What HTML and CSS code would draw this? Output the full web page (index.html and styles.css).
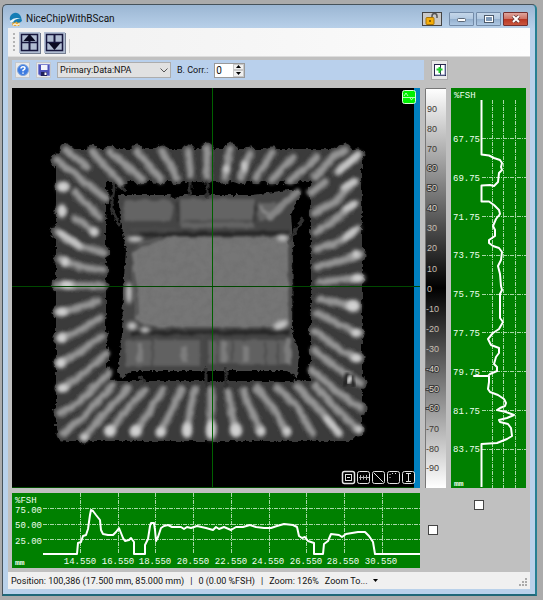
FILE: index.html
```html
<!DOCTYPE html>
<html lang="en">
<head>
<meta charset="utf-8">
<title>NiceChipWithBScan</title>
<link rel="stylesheet" href="styles.css">
</head>
<body>
<main class="window">
  <header class="titlebar">
    <svg class="app-icon" width="14" height="14" viewBox="0 0 14 14" aria-hidden="true">
      <path d="M1 8a5.500 5.500 0 0 1 11-3l1 4-4 3-5-1z" fill="#157db5"/>
      <path d="M1 9q5-5 11-2-5-1-8 3-3 1-3-1z" fill="#e8f3f8"/>
      <path d="M3 12q1-3 3-1 1-3 3 0 2-2 2 1l-1 2H4z" fill="#e5a936"/>
      <path d="M4 13h1v-1h2v1h2v-1h2" stroke="#fff" fill="none"/>
    </svg>
    <h1 class="title">NiceChipWithBScan</h1>
    <button class="lock" type="button" aria-label="Unlock window">
      <svg width="14" height="12" viewBox="0 0 14 12"><path d="M7 5V3a2 2 0 0 1 5 0v2" fill="none" stroke="#555" stroke-width="1.500"/><rect x="1" y="4.500" width="8" height="7" rx="1" fill="#f5ad08" stroke="#a87405"/><path d="M5 7v2" stroke="#6b4900" stroke-width="1.500"/></svg>
    </button>
    <div class="window-buttons">
      <button type="button" class="win-btn" aria-label="Minimize"><svg width="10" height="8" viewBox="0 0 10 8"><rect x=".5" y="3.500" width="8" height="3" rx="1" fill="#fff" stroke="#5b6878"/></svg></button>
      <button type="button" class="win-btn" aria-label="Maximize"><svg width="10" height="8" viewBox="0 0 10 8"><rect x="1.500" y="1.500" width="7" height="5" fill="none" stroke="#4d5a6a" stroke-width="3"/><rect x="1.500" y="1.500" width="7" height="5" fill="#7f9ab8" stroke="#fff"/></svg></button>
      <button type="button" class="win-btn close" aria-label="Close"><svg width="10" height="8" viewBox="0 0 10 8"><path d="M2 1l6 6M8 1L2 7" stroke="#6a3b3b" stroke-width="3.500"/><path d="M2 1l6 6M8 1L2 7" stroke="#fff" stroke-width="2"/></svg></button>
    </div>
  </header>

  <div class="toolbar">
    <span class="grip"></span>
    <button type="button" class="nav-btn" aria-label="Previous"><svg width="21" height="21" viewBox="0 0 21 21"><path d="M2.500 2.500h16v16h-16zM2.500 10.500h16" fill="none" stroke="#16163c" stroke-width="1.500"/><path d="M10.500 18V5" stroke="#16163c" stroke-width="2"/><path d="M10.500 2l6 7h-12z" fill="#0b0b22"/></svg></button>
    <button type="button" class="nav-btn" aria-label="Next"><svg width="21" height="21" viewBox="0 0 21 21"><path d="M2.500 2.500h16v16h-16zM2.500 10.500h16" fill="none" stroke="#16163c" stroke-width="1.500"/><path d="M10.500 3v13" stroke="#16163c" stroke-width="2"/><path d="M10.500 18l6-7h-12z" fill="#0b0b22"/></svg></button>
    <span class="divider"></span>
  </div>

  <section class="workspace">
    <div class="controls">
      <button type="button" class="tool" aria-label="Help"><svg width="12" height="12" viewBox="0 0 12 12"><circle cx="6" cy="6" r="5.500" fill="#3d7be0" stroke="#7fa5dc"/><path d="M4 4.500q0-1.700 2-1.700t2 1.500q0 1-2 2v1M6 8.500v1.300" fill="none" stroke="#fff" stroke-width="1.500"/></svg></button>
      <button type="button" class="tool" aria-label="Save"><svg width="12" height="12" viewBox="0 0 12 12"><path d="M.5.5h11v11H2L.5 10z" fill="#4b50b8" stroke="#7f84d0"/><path d="M3 1h6.500v5H3z" fill="#f3f4fc"/><path d="M3 8h6v4H3z" fill="#20205a"/><path d="M6.500 8.500h2V11h-2z" fill="#fff"/></svg></button>
      <div class="select-wrap">
        <select class="channel" aria-label="Data channel"><option>Primary:Data:NPA</option></select>
        <svg class="chevron" width="8" height="5" viewBox="0 0 8 5" aria-hidden="true"><path d="M.5.5L4 4 7.500.5" fill="none" stroke="#555"/></svg>
      </div>
      <label class="corr" for="corr">B. Corr.:</label>
      <div class="spinner">
        <input id="corr" type="number" value="0">
        <div class="steps">
          <button type="button" aria-label="Increase"><svg width="5" height="3" viewBox="0 0 5 3"><path d="M2.500 0L5 3H0z"/></svg></button>
          <button type="button" aria-label="Decrease"><svg width="5" height="3" viewBox="0 0 5 3"><path d="M2.500 3L5 0H0z"/></svg></button>
        </div>
      </div>
    </div>
    <button type="button" class="tool add" aria-label="Add view"><svg width="12" height="12" viewBox="0 0 12 12"><rect x=".5" y=".5" width="11" height="11" fill="#fff" stroke="#25254a"/><path d="M6.500 1v10" stroke="#25254a"/><path d="M11 1v10M1 11h10" stroke="#7b88b4"/><path d="M2.500 5.500h6M5.500 3v6" stroke="#1ed02c" stroke-width="2"/></svg></button>

    <svg class="map" viewBox="12 88 408 400" preserveAspectRatio="none" role="img" aria-label="C-scan of a chip">
      <defs>
        <filter id="ragged" x="-5%" y="-5%" width="110%" height="110%" color-interpolation-filters="sRGB">
          <feTurbulence type="fractalNoise" baseFrequency=".25" numOctaves="2" seed="4" result="n"/>
          <feDisplacementMap in="SourceGraphic" in2="n" scale="5" xChannelSelector="R" yChannelSelector="G"/>
          <feGaussianBlur stdDeviation=".7"/>
        </filter>
        <filter id="soft" x="-5%" y="-5%" width="110%" height="110%" color-interpolation-filters="sRGB">
          <feTurbulence type="fractalNoise" baseFrequency=".1" numOctaves="2" seed="9" result="n"/>
          <feDisplacementMap in="SourceGraphic" in2="n" scale="4" xChannelSelector="R" yChannelSelector="G"/>
          <feGaussianBlur stdDeviation="1.500"/>
        </filter>
        <filter id="glow" x="-10%" y="-10%" width="120%" height="120%" color-interpolation-filters="sRGB"><feGaussianBlur stdDeviation="2"/></filter>
        <filter id="grain" x="0" y="0" width="100%" height="100%">
          <feTurbulence type="fractalNoise" baseFrequency=".13" numOctaves="3" seed="2"/>
          <feColorMatrix values="0 0 0 0 .1  0 0 0 0 .1  0 0 0 0 .1  1.400 0 0 0 -.5"/>
          <feComposite in2="SourceGraphic" operator="in"/>
        </filter>
        <g id="leads" fill="none" stroke-linecap="round">
          <path d="M57 160L105 198M66 150L87 167M61 186H66M75 193L100 217M61 211H63M75 218L95 232M57 232L80 247 103 252M60 259L80 267 103 270M58 285L102 286M59 312L76 309 98 301M59 338L74 334 100 318M60 363L77 354 102 336M61 388L78 378 106 354M60 413L77 404 109 373M63 434L82 418 112 386M84 437L100 419 128 388M110 431L122 415 145 390M134 432L148 414 163 390M160 433L171 412 181 390M187 432L190 410 195 390M211 432V390M236 432L232 414 228 392M261 433L252 412 243 391M287 433L275 411 257 388M312 433L298 408 278 388M338 433L325 416 297 386M358 430L337 409 315 386M361 408L342 396 312 370M360 383L339 369 314 350M358 358L340 350 315 331M358 333L340 325 317 313M355 306L320 299M358 278L320 282M360 255L340 261 317 267M353 232L337 243 317 249M352 205L338 218 316 232M353 182L335 202 315 213M358 155L337 172M325 182L311 193M345 150L333 157 315 177M317 157L305 168 290 181M293 157L272 180M272 153L256 178M250 153L241 178M230 149L225 178M207 149V177M188 151L191 175M162 151L177 178M137 151L160 179M110 152L142 179M92 152L106 167 121 183"/>
        </g>
      </defs>
      <rect x="12" y="88" width="408" height="400" fill="#000"/>
      <g filter="url(#ragged)">
        <path d="M64 149H352L362 158V430L352 441H66L56 430V158ZM106 181V381H311V181Z" fill="#3b3b3b" fill-rule="evenodd"/>
        <use href="#leads" stroke="#424242" stroke-width="13"/>
      </g>
      <path d="M109 184H309V380H109Z" fill="#000" filter="url(#ragged)"/>
      <g filter="url(#ragged)">
        <path d="M118 195H170L176 199 182 195H252L288 190H299L300 197 291 214 293 240 292 330 299 352 297 378 287 371H132L121 379 118 370 122 335 123 290 126 250 120 215Z" fill="#454545"/>
        <path d="M190 182V196M207 178V198M206 368V392M226 368V392M140 376L145 383M287 245L303 218M115 182L111 208 120 226M118 185L126 191" stroke="#303030" stroke-width="3" fill="none"/>
      </g>
      <use href="#leads" stroke="#666" stroke-width="9" filter="url(#soft)"/>
      <use href="#leads" stroke="#949494" stroke-width="5" filter="url(#soft)"/>
      <g fill="#d2d2d2" filter="url(#glow)">
        <ellipse cx="63" cy="187" rx="6" ry="5"/><ellipse cx="62" cy="211" rx="4" ry="7"/>
        <ellipse cx="62" cy="312" rx="6" ry="4"/><ellipse cx="62" cy="338" rx="5" ry="5"/>
        <ellipse cx="61" cy="363" rx="5" ry="5"/><ellipse cx="63" cy="388" rx="6" ry="4"/>
        <ellipse cx="65" cy="262" rx="4" ry="5"/><ellipse cx="67" cy="285" rx="7" ry="4"/>
        <ellipse cx="110" cy="431" rx="6" ry="6"/><ellipse cx="136" cy="431" rx="6" ry="6"/>
        <ellipse cx="84" cy="437" rx="4" ry="3"/><ellipse cx="161" cy="432" rx="5" ry="5"/>
        <ellipse cx="187" cy="430" rx="5" ry="8"/><ellipse cx="211" cy="430" rx="5" ry="10"/>
        <ellipse cx="236" cy="430" rx="6" ry="7"/><ellipse cx="261" cy="431" rx="4" ry="4"/>
        <ellipse cx="287" cy="431" rx="4" ry="4"/><ellipse cx="353" cy="306" rx="7" ry="6"/>
        <ellipse cx="356" cy="333" rx="5" ry="4"/><ellipse cx="356" cy="358" rx="6" ry="4"/>
        <ellipse cx="358" cy="278" rx="7" ry="4"/><ellipse cx="356" cy="254" rx="4" ry="4"/>
        <ellipse cx="359" cy="429" rx="4" ry="3"/><ellipse cx="244" cy="166" rx="3" ry="6"/>
        <ellipse cx="226" cy="169" rx="3" ry="4"/><ellipse cx="94" cy="232" rx="4" ry="4"/>
      </g>
      <g fill="none" stroke="#d0d0d0" stroke-width="5" stroke-linecap="round" filter="url(#glow)">
        <path d="M339 171L358 155M343 188L356 181M345 209L356 203M345 238L358 228M326 418L340 434M60 233L80 246"/>
      </g>
      <path d="M344 386L347 373M355 386L352 375" stroke="#111" fill="none" filter="url(#soft)" stroke-width="3"/>
      <path d="M348 383L351 376" stroke="#e0e0e0" stroke-width="4" filter="url(#soft)"/>
      <g filter="url(#soft)">
        <path d="M124 200H169Q175 203 174 213L170 221H124ZM180 199H254V228H180ZM257 202H275L276 215 259 221Z" fill="#646464"/>
        <path d="M126 340H200V366H126ZM208 340H291V364H208Z" fill="#616161"/>
        <path d="M270 217L297 192" stroke="#858585" stroke-width="7" stroke-linecap="round"/>
        <path d="M260 206L268 214" stroke="#8a8a8a" stroke-width="3"/>
        <path d="M178 202V222M255 202V223" stroke="#333" stroke-width="2"/>
        <path d="M182 221H254M130 229H176" stroke="#4c4c4c" stroke-width="2"/>
        <path d="M130 235L290 233M130 333L290 332" stroke="#262626" stroke-width="4"/>
        <path d="M288 338V364M184 346V362M140 344V362M224 342V364M246 346V361" stroke="#7c7c7c" stroke-width="6"/>
        <path d="M152 340V366M203 334V368M217 334V368M232 340V366M265 342V364M278 342V364" stroke="#4b4b4b" stroke-width="2"/>
      </g>
      <path d="M133 250Q147 240 165 237H284L289 244 290 320 280 328 270 327H160L147 325 136 320 135 290 132 272Z" fill="#767676" filter="url(#soft)"/>
      <path d="M137 250Q155 240 170 239H284L288 250V318L270 325H160L139 318Z" filter="url(#grain)" opacity=".25"/>
      <g fill="none" stroke="#484848" stroke-width="2" filter="url(#soft)">
        <path d="M131 250Q150 243 163 237M133 273Q138 295 137 316M290 240V324"/>
      </g>
      <g fill="#c4c4c4" filter="url(#glow)">
        <ellipse cx="135" cy="239" rx="8" ry="3"/><ellipse cx="129" cy="293" rx="3" ry="11"/>
        <ellipse cx="132" cy="326" rx="5" ry="4"/><ellipse cx="145" cy="330" rx="5" ry="3"/>
        <ellipse cx="281" cy="325" rx="8" ry="4" transform="rotate(-20 281 325)"/><ellipse cx="283" cy="238" rx="6" ry="3"/>
      </g>
      <rect x="414" y="88" width="6" height="400" fill="#0080c0"/>
      <path d="M212.500 88V488" stroke="#006000"/><path d="M12 286.500H420M12 487.500H414" stroke="#004800"/>
      <g>
        <rect x="402.500" y="90.500" width="13" height="13" rx="2" fill="#00f000" stroke="#d8ffd8"/>
        <path d="M403 97.500H415M404 96L406 93 408 96M410 97Q411 102 413 98" stroke="#b4ffb4" fill="none"/>
      </g>
      <g fill="none" stroke="#e4e4e4">
        <rect x="342.500" y="471.500" width="12" height="12" rx="2" stroke-width="1.500"/>
        <rect x="345.500" y="474.500" width="6" height="6"/><path d="M347 477.500H350"/>
        <rect x="357.500" y="471.500" width="12" height="12" rx="2"/><path d="M359 477.500H369M360.500 475V480M363.500 475.500V479.500M366.500 475V480" stroke="#b8b8b8"/>
        <rect x="372.500" y="471.500" width="12" height="12" rx="2"/><path d="M374 473L383 482"/>
        <rect x="387.500" y="471.500" width="12" height="12" rx="2"/><path d="M390 474V480M392 473.500H396" stroke-dasharray="1 2"/>
        <rect x="402.500" y="471.500" width="12" height="12" rx="2"/><path d="M408.500 473V482M406 473.500H411M406 481.500H411"/>
      </g>
    </svg>

    <svg class="scale" viewBox="425 88 21 400" preserveAspectRatio="none" role="img" aria-label="Amplitude scale">
      <defs><linearGradient id="ramp" x1="0" y1="0" x2="0" y2="1"><stop offset="0" stop-color="#fff"/><stop offset=".5" stop-color="#000"/><stop offset="1" stop-color="#fff"/></linearGradient></defs>
      <rect x="425" y="88" width="21" height="400" fill="url(#ramp)"/>
      <path d="M425.500 488V88.500H446" fill="none" stroke="#777"/>
      <g class="scale-dark"><text x="427" y="112">90</text><text x="427" y="132">80</text><text x="427" y="152">70</text></g>
      <g class="scale-mid"><text x="427" y="171">60</text><text x="427" y="191">50</text><text x="427" y="211">40</text></g>
      <g class="scale-light"><text x="427" y="231">30</text><text x="427" y="251">20</text><text x="427" y="272">10</text><text x="427" y="292">0</text><text x="426" y="312">-10</text><text x="426" y="332">-20</text><text x="426" y="352">-30</text></g>
      <g class="scale-mid"><text x="426" y="372">-40</text><text x="426" y="392">-50</text><text x="426" y="411">-60</text></g>
      <g class="scale-dark"><text x="426" y="432">-70</text><text x="426" y="452">-80</text><text x="426" y="471">-90</text></g>
    </svg>

    <svg class="plot" viewBox="451 88 75 400" preserveAspectRatio="none" role="img" aria-label="Vertical profile">
      <rect x="451" y="88" width="75" height="400" fill="#008000"/>
      <path class="gridline" d="M492.500 100V488M503.500 100V488M515.500 100V488M482 138.500H526M482 177.500H526M482 216.500H526M482 255.500H526M482 294.500H526M482 332.500H526M482 371.500H526M482 410.500H526M482 449.500H526"/>
      <path class="trace" d="M481.500 100V154.500L489 155.500 494 158 500 160 502 163 501 167 502 170 499 173 498 182 494 186 490 185 481.500 185.500V201.500H489L494 205 499 210 500 214 496 219 493 226 495 230V236L489 240 489 243 493 246 499 248 502 252 501 260 498 266 500 274 501 286 502 290 500 294 500 318 503 322 499 329 493 333 488 339 491 345 499 348 499 353 496 357 494 364 497 367 497 371 490 374 488 376H474H489V382L488 389 490 392 498 395 504 399 506 403 505 406 500 408 497 410 506 412 514 415 507 418 499 420 500 422 508 424 511 428 512 436 507 439 497 443 481.500 444V487"/>
      <g class="axis"><text x="454" y="98">%FSH</text><text x="453" y="142">67.75</text><text x="453" y="181">69.75</text><text x="453" y="220">71.75</text><text x="453" y="258">73.75</text><text x="453" y="297">75.75</text><text x="453" y="336">77.75</text><text x="453" y="375">79.75</text><text x="453" y="414">81.75</text><text x="453" y="452">83.75</text></g>
      <text class="unit" x="454" y="486">mm</text>
    </svg>

    <svg class="plot" viewBox="12 493 408 75" preserveAspectRatio="none" role="img" aria-label="Horizontal profile">
      <rect x="12" y="493" width="408" height="75" fill="#008000"/>
      <path class="gridline" d="M43 508.500H420M43 524.500H420M43 539.500H420M80.500 493V554M118.500 493V554M155.500 493V554M193.500 493V554M231.500 493V554M269.500 493V554M306.500 493V554M344.500 493V554M382.500 493V554"/>
      <path class="trace" d="M43 554H77L78 543 81 542 83 536 86 535 88 529 90 515 91 510 93 511 96 515 100 520 101 530 103 534 108 535 113 535 116 532 119 528 123 538 125 541 129 540 131 538 134 542V554H145V545L148 539 150 526 151 523 154 523 155 530 156 541 158 537 161 528 164 526 168 525 172 527 181 527 184 529 187 527 191 528 197 526 206 528 213 530 216 527 219 529 224 527 231 530 236 527 243 527 250 525 256 527 264 528 271 528 277 526 284 524 293 525 297 527 299 536 302 538 305 537 308 541 314 543V554H323L324 544 328 541 331 534 339 535 342 537 346 534 352 533 358 532 365 532 369 536 373 542 375 554H420"/>
      <g class="axis"><text x="15" y="503">%FSH</text><text x="15" y="513">75.00</text><text x="15" y="528">50.00</text><text x="15" y="544">25.00</text></g>
      <text class="unit" x="15" y="565">mm</text>
      <g class="axis centered"><text x="80" y="564">14.550</text><text x="118" y="564">16.550</text><text x="155" y="564">18.550</text><text x="193" y="564">20.550</text><text x="231" y="564">22.550</text><text x="268" y="564">24.550</text><text x="306" y="564">26.550</text><text x="343" y="564">28.550</text><text x="381" y="564">30.550</text></g>
    </svg>

    <div class="toggles">
      <input type="checkbox" class="check low" aria-label="Lock horizontal profile">
      <input type="checkbox" class="check" aria-label="Lock vertical profile">
    </div>
  </section>

  <footer class="status">
    <span>Position: 100,386 (17.500 mm, 85.000 mm)</span><span>|</span><span>0 (0.00 %FSH)</span><span>|</span><span>Zoom: 126%</span>
    <button type="button" class="zoom">Zoom To...<svg width="5" height="3" viewBox="0 0 5 3"><path d="M0 0h5L2.500 3z"/></svg></button>
    <svg class="resize" width="9" height="9" viewBox="0 0 9 9" aria-hidden="true"><path d="M6 0h2v2H6zM6 3h2v2H6zM6 6h2v2H6zM3 3h2v2H3zM3 6h2v2H3zM0 6h2v2H0z" fill="#aaa"/></svg>
  </footer>
</main>
</body>
</html>
```
FILE: styles.css
```css
* { box-sizing: border-box; }

body {
  margin: 0;
  min-height: 100vh;
  display: flex;
  padding: 4px 6px 4px 2px;
  background: #ababab;
  font-family: Roboto, "Liberation Sans", sans-serif;
  font-size: 9px;
  color: #111;
}

button, input, select { font: inherit; color: inherit; margin: 0; padding: 0; }

.window {
  flex: 1;
  display: flex;
  flex-direction: column;
  padding: 0 5px 5px;
  border: 1px solid #46525a;
  border-right: 2px solid #267f92;
  border-bottom: 2px solid #1f6878;
  border-radius: 5px 5px 0 0;
  background: linear-gradient(#9bb6d3, #b9d1ea 24px);
}

.titlebar {
  display: flex;
  align-items: center;
  height: 23px;
  padding: 4px 2px 0 1px;
}

.app-icon { margin-right: 3px; }
.title { margin: 0; flex: 1; font-size: 10px; font-weight: 400; line-height: 16px; }

.lock {
  display: flex;
  align-items: center;
  justify-content: center;
  width: 20px;
  height: 14px;
  margin-right: 7px;
  border: 1px solid #444;
  background: #c9c9c9;
}

.window-buttons { display: flex; gap: 2px; }

.win-btn {
  display: flex;
  align-items: center;
  justify-content: center;
  width: 25px;
  height: 14px;
  border: 1px solid #738ba8;
  border-radius: 1px;
  background: linear-gradient(#c4d6e9, #b0c7e0 50%, #93afcd 50%, #adc7e2);
}

.close { border-color: #742f2f; background: linear-gradient(#dfa59d, #cf7062 50%, #b93522 50%, #c9563f); }

.toolbar {
  display: flex;
  align-items: center;
  gap: 4px;
  height: 28px;
  padding-left: 5px;
  background: linear-gradient(90deg, #f0f0f0, #fdfdfd);
}

.grip { width: 2px; height: 19px; background: repeating-linear-gradient(#b4b4b4 0 2px, transparent 2px 4px); }

.nav-btn {
  display: flex;
  width: 21px;
  height: 21px;
  border: 0;
  background: #b1bdd2;
  box-shadow: 1px 1px 0 #747e91;
}

.divider { width: 1px; height: 14px; margin-top: 8px; background: #ccc; }

.workspace {
  flex: 1;
  display: grid;
  grid-template-columns: minmax(0, 1fr) 21px 75px;
  grid-template-rows: 20px minmax(0, 1fr) 75px;
  gap: 5px;
  padding: 3px 4px 4px;
  border-top: 1px solid #ddd;
  background: #c0c0c0;
}

.controls {
  display: flex;
  align-items: center;
  gap: 6px;
  min-width: 0;
  padding: 0 3px;
  margin-right: -4px;
  background: #b9d0ec;
}

.tool {
  display: flex;
  align-items: center;
  justify-content: center;
  width: 15px;
  height: 16px;
  border: 1px solid #c4c8ce;
  background: #e9e9e9;
}

.add { grid-column: 2 / 4; width: 17px; height: 20px; margin-left: 6px; border-color: #aaa; }

.select-wrap { display: flex; align-items: center; }

.channel {
  appearance: none;
  width: 114px;
  height: 16px;
  padding: 0 2px;
  border: 1px solid #adadad;
  border-radius: 0;
  background: #e1e1e1;
  line-height: 14px;
}

.chevron { margin: 0 3px 0 -11px; pointer-events: none; }
.corr { line-height: 16px; }

.spinner { display: flex; height: 15px; border: 1px solid #999; background: #fff; }
.spinner input { width: 18px; border: 0; padding-left: 1px; background: #fff; appearance: textfield; font-size: 10px; line-height: 13px; }
.spinner input::-webkit-inner-spin-button { display: none; }
.steps { display: flex; flex-direction: column; width: 11px; }
.steps button { flex: 1; display: flex; align-items: center; justify-content: center; border: 1px solid #c8c8c8; background: #f0f0f0; }

.map, .scale, .plot { display: block; width: 100%; height: 100%; min-height: 0; }
.map, .scale, .scale + .plot { margin-top: 3px; height: calc(100% - 3px); }

.scale-dark, .scale-mid, .scale-light { font: 9px "Liberation Sans", sans-serif; }
.scale-dark { fill: #403a34; }
.scale-mid { fill: #ddd6cc; stroke: #3c3c3c; stroke-width: 2px; paint-order: stroke; }
.scale-light { fill: #c6bdb2; }

.gridline { fill: none; stroke: #a6d8a6; stroke-dasharray: 4 1 1 1; }
.trace { fill: none; stroke: #fff; stroke-width: 2; stroke-linejoin: round; }
.axis { font: 9px "Liberation Mono", monospace; fill: #f0fff0; }
.centered { text-anchor: middle; }
.unit { font: bold 8px "Liberation Mono", monospace; fill: #f0fff0; }

.toggles { grid-column: 2 / 4; display: flex; gap: 36px; align-items: flex-start; padding: 7px 0 0 3px; }
.check { appearance: none; width: 10px; height: 10px; border: 1px solid #444; background: #fff; }
.low { margin-top: 25px; }

.status {
  display: flex;
  align-items: center;
  gap: 6px;
  height: 17px;
  padding: 0 2px 0 3px;
  background: #f0f0f0;
  white-space: nowrap;
}

.zoom { display: flex; align-items: center; gap: 5px; border: 0; background: none; }
.resize { margin-left: auto; align-self: flex-end; margin-bottom: 2px; }
```
